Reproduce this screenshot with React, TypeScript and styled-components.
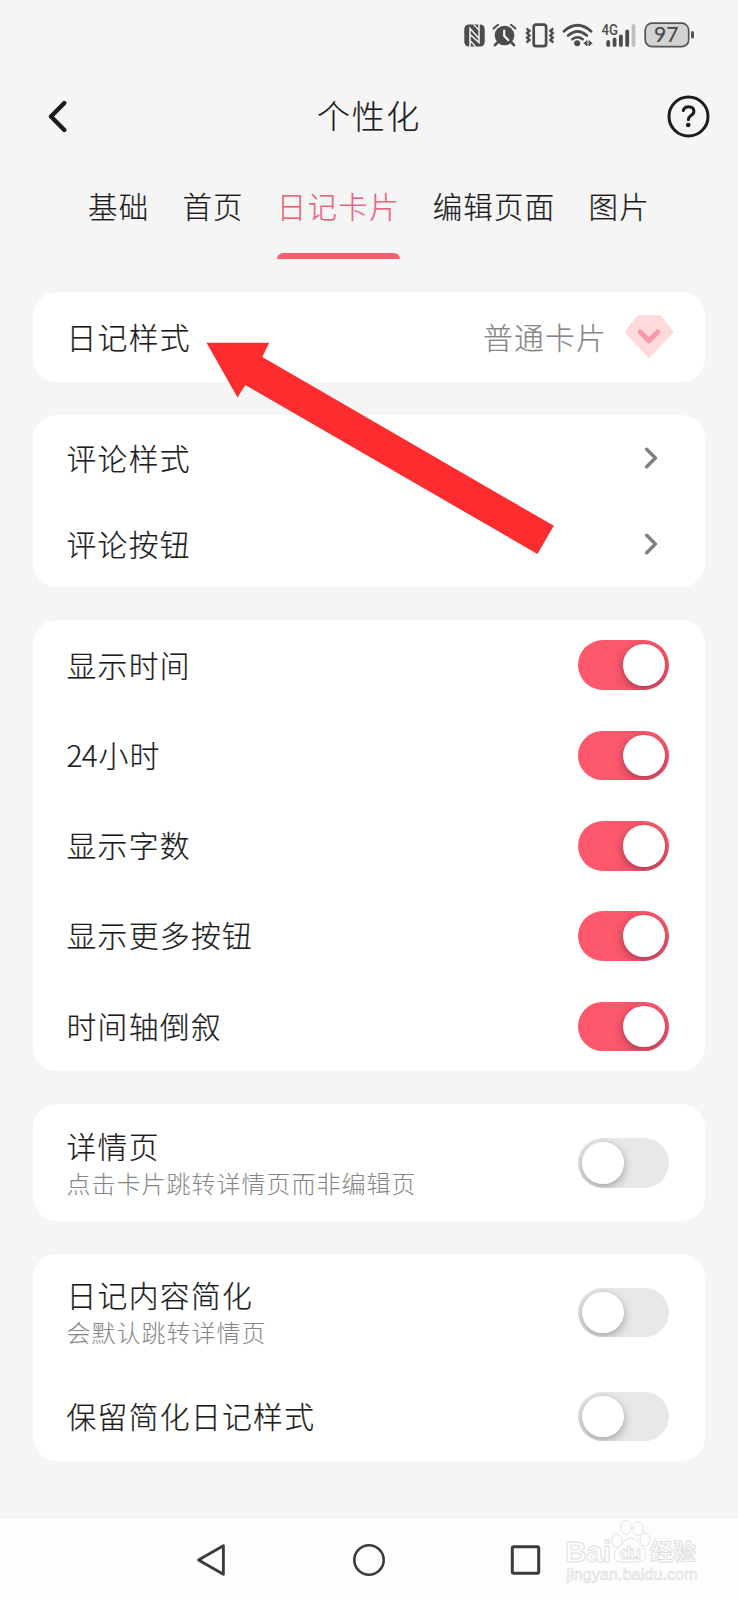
import React, { useState } from "react";
import styled, { createGlobalStyle } from "styled-components";

const GlobalStyle = createGlobalStyle`
  * { box-sizing: border-box; }
  body {
    margin: 0;
    background: #f5f5f5;
    color: #1c1c1c;
    font-family: "Noto Sans CJK SC", sans-serif;
    font-weight: 300;
  }
`;

const Screen = styled.div`
  position: relative;
  width: 738px;
  height: 1600px;
  overflow: hidden;
  display: flex;
  flex-direction: column;
  background: #f5f5f5;
  font-family: "Noto Sans CJK SC", sans-serif;
`;

const StatusBar = styled.div`
  display: flex;
  align-items: center;
  justify-content: flex-end;
  height: 70px;
  padding-right: 43px;
  color: #4c4c4c;
  gap: 7.4px;
  svg { display: block; flex: none; }
`;

const Header = styled.header`
  display: grid;
  grid-template-columns: 60px 1fr 60px;
  align-items: center;
  height: 92px;
  padding: 0 28px 0 28px;
`;

const IconButton = styled.button<{ $align: string }>`
  display: flex;
  justify-content: ${(p) => p.$align};
  align-items: center;
  border: 0;
  padding: 0;
  background: none;
  color: #1c1c1c;
`;

const Title = styled.h1`
  margin: 0 0 3px;
  text-align: center;
  font-size: 33px;
  line-height: 48px;
  font-weight: 300;
  letter-spacing: 1.6px;
  -webkit-text-stroke: 0.2px currentColor;
`;

const Tabs = styled.nav`
  display: flex;
  gap: 33px;
  height: 97px;
  padding-left: 88px;
`;

const Tab = styled.button<{ $active: boolean }>`
  display: flex;
  flex-direction: column;
  justify-content: space-between;
  border: 0;
  padding: 21px 0 0;
  background: none;
  white-space: nowrap;
  font: inherit;
  font-size: 29.5px;
  line-height: 44px;
  letter-spacing: 1.2px;
  -webkit-text-stroke: 0.2px currentColor;
  color: ${(p) => (p.$active ? "#e9647a" : "#1c1c1c")};
  &::after {
    content: "";
    width: 100%;
    height: 6px;
    border-radius: 6px 6px 0 0;
    background: ${(p) => (p.$active ? "#f95d6f" : "transparent")};
  }
`;

const Content = styled.main`
  flex: 1;
  display: flex;
  flex-direction: column;
  gap: 32.8px;
  padding: 33px 33px 0;
`;

const Card = styled.section`
  border-radius: 24px;
  background: #fff;
`;

const Row = styled.div<{ $height: number }>`
  display: flex;
  align-items: center;
  justify-content: space-between;
  height: ${(p) => p.$height}px;
  padding: 0 36.5px 0 33.5px;
`;

const LabelBlock = styled.div`
  padding-bottom: 2.4px;
`;

const Label = styled.div`
  font-size: 29.8px;
  line-height: 42px;
  letter-spacing: 1.3px;
  -webkit-text-stroke: 0.2px currentColor;
`;

const Digits = styled.span`
  letter-spacing: -0.7px;
  margin-right: 1.4px;
`;

const Hint = styled.div`
  margin-top: 1px;
  font-size: 24px;
  line-height: 32px;
  letter-spacing: 1px;
  color: #858585;
`;

const Value = styled.div`
  display: flex;
  align-items: center;
  gap: 17.5px;
  margin-right: -5px;
  font-size: 29.8px;
  letter-spacing: 1.2px;
  color: #878787;
  -webkit-text-stroke: 0.2px currentColor;
`;

const ValueText = styled.span`
  margin: 0 -1px 2.4px 0;
`;

const ChevronSlot = styled.span`
  display: flex;
  margin-right: 10.5px;
  color: #808080;
`;

const Track = styled.button<{ $on: boolean }>`
  display: flex;
  align-items: center;
  justify-content: ${(p) => (p.$on ? "flex-end" : "flex-start")};
  width: 90.5px;
  height: 49.5px;
  margin-top: 1px;
  border: 0;
  padding: 4px;
  border-radius: 25px;
  overflow: hidden;
  background: ${(p) => (p.$on ? "#fd586b" : "#e8e8e8")};
`;

const Knob = styled.span<{ $on: boolean }>`
  width: 41.5px;
  height: 41.5px;
  border-radius: 50%;
  background: #fff;
  box-shadow: 0 3px 10px ${(p) => (p.$on ? "rgba(70, 30, 60, 0.5)" : "rgba(0, 0, 0, 0.32)")};
`;

const NavBar = styled.footer`
  display: flex;
  align-items: center;
  justify-content: center;
  gap: 121px;
  height: 81px;
  background: #fdfdfd;
  color: #3b3b3b;
`;

const Pointer = styled.svg`
  position: absolute;
  left: 200px;
  top: 335px;
  pointer-events: none;
`;

const Watermark = styled.svg`
  position: absolute;
  left: 560px;
  top: 1516px;
`;

const NfcIcon = () => (
  <svg width="21" height="23" viewBox="0 0 21 23" fill="none" stroke="#f5f5f5">
    <rect x="0.300" y="0.500" width="20.400" height="22" rx="4.500" fill="currentColor" stroke="none" />
    <path d="M6 23V4.500L15 14.500M15 0v18.500L6 10.500" strokeWidth="1.500" />
    <path d="M6 16.500 11.500 22.500M9.500.5 15 6" strokeWidth="1.300" />
  </svg>
);

const AlarmIcon = () => (
  <svg width="25" height="24" viewBox="0 0 25 24" fill="none" stroke="currentColor" strokeLinecap="round">
    <circle cx="12.500" cy="12.500" r="9.800" fill="currentColor" stroke="none" />
    <path d="M1.500 5.500 6 1.800M23.500 5.500 19 1.800" strokeWidth="2" />
    <path d="m5.500 19.500-2.500 2.700M19.500 19.500l2.500 2.700" strokeWidth="2.600" />
    <path d="M12.200 7.500v5.200l4 4.300" stroke="#f5f5f5" strokeWidth="2.200" />
  </svg>
);

const VibrateIcon = () => (
  <svg width="30" height="25" viewBox="0 0 30 25" fill="none" stroke="currentColor">
    <rect x="8.700" y="1.600" width="12.400" height="21.600" rx="2.500" strokeWidth="2.700" />
    <path
      d="m1.500 5.500 3 2.300-2.500 2.300 2.500 2.300-2.500 2.300 2.500 2.300-3 2.500M28.300 5.500l-3 2.300 2.500 2.300-2.500 2.300 2.500 2.300-2.500 2.300 3 2.500"
      strokeWidth="2.300"
    />
  </svg>
);

const WifiIcon = () => (
  <svg width="31" height="24" viewBox="0 0 31 24" fill="none" stroke="currentColor" strokeLinecap="round">
    <path d="M2 8.200Q15.500-3.700 29 8.200" strokeWidth="2.800" />
    <path d="M6.200 12.500q9.300-8.200 18.600 0" strokeWidth="2.800" />
    <path d="M10.300 16.200q5.200-4 10.400 0" strokeWidth="2.500" />
    <circle cx="15.200" cy="20.300" r="3" fill="currentColor" stroke="none" />
    <path d="M24.800 17.500v5.500M27.300 17.500v5.500" strokeWidth="1.500" strokeLinecap="butt" />
    <path d="m24 18.200-2.700 2 2.700 2ZM28 18.200l2.700 2-2.700 2Z" fill="currentColor" stroke="none" />
  </svg>
);

const SignalIcon = () => (
  <svg width="36" height="25" viewBox="0 0 36 25" fill="currentColor">
    <text x="0.500" y="11.500" fontFamily="Roboto, sans-serif" fontWeight="500" fontSize="14.500" textLength="16.500" lengthAdjust="spacingAndGlyphs">
      4G
    </text>
    <rect x="5.300" y="17" width="3.800" height="7" rx="1.900" />
    <rect x="11.700" y="14.500" width="3.800" height="9.500" rx="1.900" />
    <rect x="18" y="11.500" width="3.800" height="12.500" rx="1.900" />
    <rect x="24.300" y="6.500" width="3.800" height="17.500" rx="1.900" />
    <rect x="30.600" y="1" width="3.800" height="23" rx="1.900" fill="#c0c0c0" />
  </svg>
);

const BatteryIcon = () => (
  <svg width="51" height="26" viewBox="0 0 51 26">
    <rect x="1.200" y="1.200" width="43.500" height="23.500" rx="7" fill="#d3d3d3" stroke="#555" strokeWidth="1.700" />
    <rect x="47" y="9" width="3" height="7.500" rx="1.500" fill="#555" />
    <text x="22.300" y="20.300" textAnchor="middle" fontFamily="Lato, sans-serif" fontWeight="400" fontSize="21" fill="#484848" stroke="#484848" strokeWidth="0.200">
      97
    </text>
  </svg>
);

const BackIcon = () => (
  <svg width="20" height="33" viewBox="0 0 20 33" fill="none" stroke="currentColor" strokeWidth="4.400" strokeLinecap="round" strokeLinejoin="round">
    <path d="M16.300 3 3 16.500 16.300 30" />
  </svg>
);

const HelpIcon = () => (
  <svg width="43" height="43" viewBox="0 0 43 43" fill="none" stroke="currentColor">
    <circle cx="21.500" cy="21.500" r="19.500" strokeWidth="3" />
    <path d="M16.300 15.500q.9-3.700 5.200-3.700 5.200.1 5.400 4.400.1 2.300-2.900 4.200-2.400 1.800-2.600 4.300" strokeWidth="3" strokeLinecap="round" />
    <circle cx="21.200" cy="30" r="2.300" fill="currentColor" stroke="none" />
  </svg>
);

const DiamondIcon = () => (
  <svg width="50" height="44" viewBox="0 0 50 44" fill="none">
    <path
      d="M14 1.500h22L48 17 25 42 2 17Z"
      fill="#ffdadb"
      stroke="#ffdadb"
      strokeWidth="2.500"
      strokeLinejoin="round"
    />
    <path d="m16.300 17 8.700 8.800 8.700-8.800" stroke="#fb98a6" strokeWidth="5" strokeLinecap="round" strokeLinejoin="round" />
  </svg>
);

const ChevronIcon = () => (
  <svg width="14" height="22" viewBox="0 0 14 22" fill="none" stroke="currentColor" strokeWidth="3.500" strokeLinecap="round" strokeLinejoin="round">
    <path d="m2.700 2.300 8.700 8.700-8.700 8.700" />
  </svg>
);

function Toggle({ initial }: { initial: boolean }) {
  const [on, setOn] = useState(initial);
  return (
    <Track $on={on} role="switch" aria-checked={on} onClick={() => setOn(!on)}>
      <Knob $on={on} />
    </Track>
  );
}

function ToggleRow({ label, hint, on = false }: { label: React.ReactNode; hint?: string; on?: boolean }) {
  return (
    <Row $height={hint ? 117 : 90.3}>
      <LabelBlock>
        <Label>{label}</Label>
        {hint && <Hint>{hint}</Hint>}
      </LabelBlock>
      <Toggle initial={on} />
    </Row>
  );
}

function LinkRow({ label }: { label: string }) {
  return (
    <Row $height={86}>
      <LabelBlock>
        <Label>{label}</Label>
      </LabelBlock>
      <ChevronSlot>
        <ChevronIcon />
      </ChevronSlot>
    </Row>
  );
}

const tabNames = ["基础", "首页", "日记卡片", "编辑页面", "图片"];

export default function App() {
  const [active, setActive] = useState("日记卡片");
  return (
    <Screen>
      <GlobalStyle />
      <StatusBar>
        <NfcIcon />
        <AlarmIcon />
        <VibrateIcon />
        <WifiIcon />
        <SignalIcon />
        <BatteryIcon />
      </StatusBar>
      <Header>
        <IconButton $align="center">
          <BackIcon />
        </IconButton>
        <Title>个性化</Title>
        <IconButton $align="flex-end">
          <HelpIcon />
        </IconButton>
      </Header>
      <Tabs>
        {tabNames.map((name) => (
          <Tab key={name} $active={name === active} onClick={() => setActive(name)}>
            {name}
          </Tab>
        ))}
      </Tabs>
      <Content>
        <Card>
          <Row $height={90}>
            <LabelBlock>
              <Label>日记样式</Label>
            </LabelBlock>
            <Value>
              <ValueText>普通卡片</ValueText>
              <DiamondIcon />
            </Value>
          </Row>
        </Card>
        <Card>
          <LinkRow label="评论样式" />
          <LinkRow label="评论按钮" />
        </Card>
        <Card>
          <ToggleRow label="显示时间" on />
          <ToggleRow
            label={
              <>
                <Digits>24</Digits>小时
              </>
            }
            on
          />
          <ToggleRow label="显示字数" on />
          <ToggleRow label="显示更多按钮" on />
          <ToggleRow label="时间轴倒叙" on />
        </Card>
        <Card>
          <ToggleRow label="详情页" hint="点击卡片跳转详情页而非编辑页" />
        </Card>
        <Card>
          <ToggleRow label="日记内容简化" hint="会默认跳转详情页" />
          <ToggleRow label="保留简化日记样式" />
        </Card>
      </Content>
      <NavBar>
        <svg width="36" height="36" viewBox="0 0 36 36" fill="none" stroke="currentColor" strokeWidth="2.800" strokeLinejoin="round">
          <path d="M4.500 18 29.400 3.700v28.600Z" />
        </svg>
        <svg width="36" height="36" viewBox="0 0 36 36" fill="none" stroke="currentColor" strokeWidth="2.600">
          <circle cx="18" cy="18" r="14.700" />
        </svg>
        <svg width="36" height="36" viewBox="0 0 36 36" fill="none" stroke="currentColor" strokeWidth="3">
          <rect x="4.300" y="4.800" width="26.400" height="26.400" rx="1.500" />
        </svg>
      </NavBar>
      <Pointer width="360" height="225" viewBox="200 335 360 225">
        <path d="M206.500 342.700H269.200L262.300 357 553.800 525.800 537.500 554 245.300 385 237.500 397.500Z" fill="#fd2c2f" />
      </Pointer>
      <Watermark width="142" height="72" viewBox="0 0 142 72" fill="#fdfdfd" stroke="#dedede" strokeWidth="0.900">
        <text x="5" y="45.500" fontFamily="Liberation Sans, sans-serif" fontWeight="700" fontSize="30" textLength="46">
          Bai
        </text>
        <ellipse cx="57" cy="24.500" rx="5" ry="6.500" />
        <ellipse cx="66" cy="11.500" rx="5.200" ry="7" />
        <ellipse cx="78" cy="12.500" rx="5" ry="7" />
        <ellipse cx="85" cy="23.500" rx="5" ry="6.500" />
        <path d="M71 22c5 0 7 5 11 9 6 5 5 15-3 15H61c-8 0-9-9-3-14 5-4 7-10 13-10Z" />
        <text x="60" y="43" fontFamily="Liberation Sans, sans-serif" fontWeight="700" fontSize="19" textLength="21">
          du
        </text>
        <text x="90" y="44" fontFamily="Noto Sans CJK SC, sans-serif" fontWeight="700" fontSize="23" textLength="46">
          经验
        </text>
        <text x="6.500" y="63.500" fontFamily="Liberation Sans, sans-serif" fontSize="16" textLength="131" strokeWidth="0.700">
          jingyan.baidu.com
        </text>
      </Watermark>
    </Screen>
  );
}
